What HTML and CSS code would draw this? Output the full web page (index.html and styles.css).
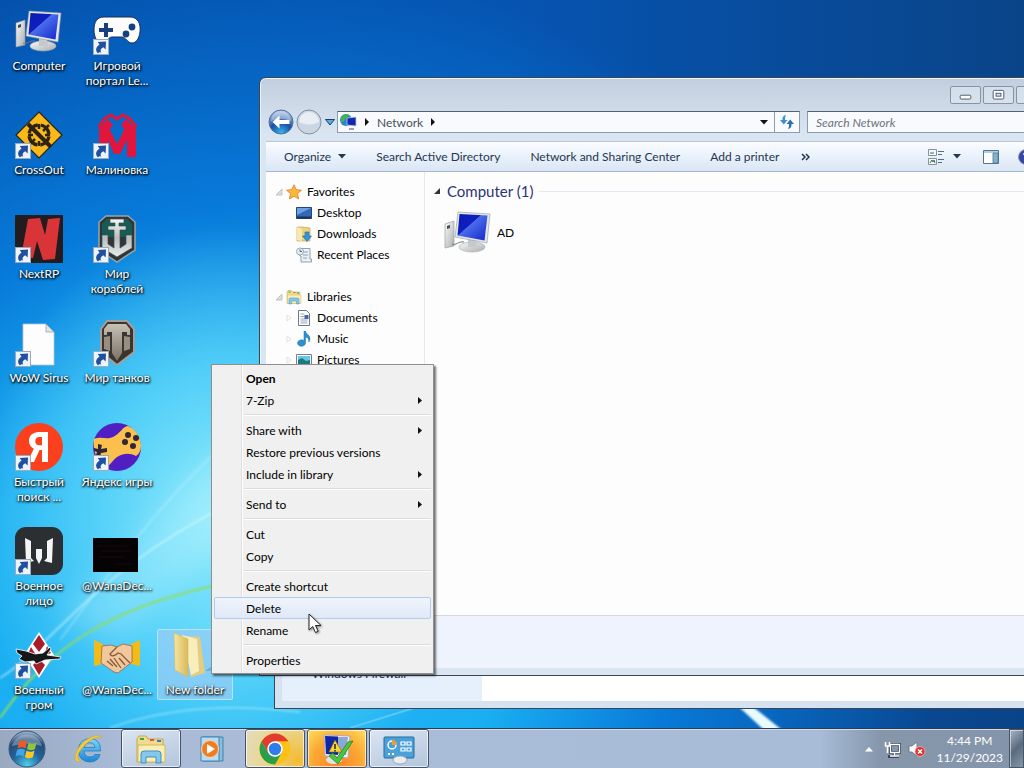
FILE: index.html
```html
<!DOCTYPE html>
<html lang="en">
<head>
<meta charset="utf-8">
<title>Desktop</title>
<link rel="stylesheet" href="styles.css">
</head>
<body>
<svg class="defs" aria-hidden="true">
  <defs>
    <linearGradient id="screen" x1="0" y1="0" x2="1" y2="1"><stop offset="0" stop-color="#0a1cae"/><stop offset=".4" stop-color="#0f1fc0"/><stop offset=".42" stop-color="#4a6cec"/><stop offset="1" stop-color="#1226c8"/></linearGradient>
    <linearGradient id="grey" x1="0" y1="0" x2="1" y2="1"><stop offset="0" stop-color="#fafbfb"/><stop offset="1" stop-color="#a9adae"/></linearGradient>
    <linearGradient id="steel" x1="0" y1="0" x2="0" y2="1"><stop offset="0" stop-color="#f3f5f5"/><stop offset=".5" stop-color="#b9bebd"/><stop offset="1" stop-color="#e8ebea"/></linearGradient>
    <linearGradient id="bronze" x1="0" y1="0" x2="0" y2="1"><stop offset="0" stop-color="#c8c0b4"/><stop offset="1" stop-color="#7b7167"/></linearGradient>
    <linearGradient id="gold" x1="0" y1="0" x2="1" y2="0"><stop offset="0" stop-color="#f6e6a0"/><stop offset="1" stop-color="#d9b95a"/></linearGradient>
    <linearGradient id="ie" x1="0" y1="0" x2="0" y2="1"><stop offset="0" stop-color="#7ed6fb"/><stop offset="1" stop-color="#1a86d4"/></linearGradient>
    <radialGradient id="orb" cx=".5" cy=".95" r=".9"><stop offset="0" stop-color="#4fd0e8"/><stop offset=".45" stop-color="#22649c"/><stop offset=".8" stop-color="#264a74"/><stop offset="1" stop-color="#8ea9c4"/></radialGradient>
    <radialGradient id="back" cx=".5" cy=".95" r=".9"><stop offset="0" stop-color="#35b8ee"/><stop offset=".5" stop-color="#1a4ea6"/><stop offset="1" stop-color="#a6bfe2"/></radialGradient>
    <symbol id="pc" viewBox="0 0 48 48">
      <path d="M1 16l9-3v25l-9 2z" fill="url(#grey)" stroke="#8f9699" stroke-width=".6"/>
      <path d="M3 18l3-1v3l-3 1z" fill="#444b50"/>
      <path d="M8 36c4 2 6-3 12-2" fill="none" stroke="#777" stroke-width="1"/>
      <ellipse cx="28" cy="39" rx="13" ry="5" fill="url(#grey)" stroke="#a9adb0" stroke-width=".6"/>
      <path d="M24 30l8 1 1 8h-9z" fill="#c6cacc"/>
      <path d="M14 4l32 2-3 29-32-6z" fill="#e4e7e8" stroke="#93999c" stroke-width=".6"/>
      <path d="M15.500 6l28 1.500-3 25-27-5z" fill="url(#screen)"/>
    </symbol>
    <symbol id="shortcut" viewBox="0 0 16 16">
      <rect x=".5" y=".5" width="15" height="15" fill="#eef3f9" stroke="#9aa9bb"/>
      <path d="M5 14.500C1.800 11.500 3 7.800 6.500 5.800L4.800 3 13 2.500 12.600 10.500 10.300 8.300C7.800 9.500 6.800 11.500 8.300 13.800 7 13 5.600 13.200 5 14.500z" fill="#1f4f9e"/>
    </symbol>
    <symbol id="library" viewBox="0 0 32 32">
      <path d="M2 6l2-3h7l2 3h15v23H2z" fill="#f0dc8c" stroke="#c7a646"/>
      <path d="M5 5h4v2H5z" fill="#3da55a"/><path d="M15 6h4v2h-4z" fill="#d55"/><path d="M22 7h4v2h-4z" fill="#3b7cc9"/>
      <path d="M3 12h27v17H3z" fill="#fbefb5" stroke="#d4b75c"/>
      <path d="M6 30V21q0-3 3-3h14q3 0 3 3v9h-5v-6H11v6z" fill="#84c8ee" stroke="#3f8fc7"/>
    </symbol>
  </defs>
</svg>

<div class="screen">
  <main class="desktop">
    <svg class="wallpaper" viewBox="0 0 1024 728" preserveAspectRatio="none" aria-hidden="true">
      <defs><filter id="soft"><feGaussianBlur stdDeviation="1.2"/></filter><filter id="haze"><feGaussianBlur stdDeviation="14"/></filter></defs>
      <path d="M60 620L230 440V540L120 640z" fill="#d8fbff" opacity=".25" filter="url(#haze)"/>
      <path d="M0 718C40 660 100 600 260 578" fill="none" stroke="#8fdc5e" stroke-width="2" filter="url(#soft)"/>
      <path d="M0 678C60 640 100 560 260 490" fill="none" stroke="#d9fbff" stroke-width="2" opacity=".55" filter="url(#soft)"/>
      <path d="M60 640C120 560 160 500 240 430" fill="none" stroke="#d9fbff" stroke-width="2" opacity=".3" filter="url(#soft)"/>
      <path d="M110 728C170 706 240 704 300 712" fill="none" stroke="#9be6fb" stroke-width="2" opacity=".6" filter="url(#soft)"/>
      <path d="M350 728L420 706" stroke="#7fd3fa" stroke-width="2" opacity=".6"/>
      <path d="M738 706L752 706 782 730 764 730z" fill="#e8fbff" filter="url(#soft)"/>
    </svg>

    <div class="icons">
      <div class="icon-column">
        <button class="icon"><svg viewBox="0 0 48 48"><use href="#pc"/></svg><span>Computer</span></button>
        <button class="icon"><svg viewBox="0 0 48 48"><path d="M24 1L47 24 24 47 1 24z" fill="#fbb81b" stroke="#2b2412" stroke-width="1.200"/><circle cx="24" cy="24" r="10" fill="none" stroke="#2b2412" stroke-width="3.500" stroke-dasharray="12.700 3" stroke-dashoffset="-1.500"/><path d="M24 13v5M24 30v5M13 24h5M30 24h5M34 14L28 20M14 34l6-6" stroke="#2b2412" stroke-width="2.500"/><path d="M13 13l23 23" stroke="#2b2412" stroke-width="4"/><use href="#shortcut" x="0" y="32" width="16" height="16"/></svg><span>CrossOut</span></button>
        <button class="icon"><svg viewBox="0 0 48 48"><path d="M0 0h48v48H0z" fill="#231c1e"/><path d="M13 4l12-1 5 17 3-16 12-1-5 41-12 1-6-19-4 17-12-1z" fill="#d93438"/><use href="#shortcut" x="0" y="32" width="16" height="16"/></svg><span>NextRP</span></button>
        <button class="icon"><svg viewBox="0 0 48 48"><path d="M8 5h23l8 8v33H8z" fill="#fdfdfd" stroke="#b9c4cc" stroke-width=".8"/><path d="M31 5v8h8z" fill="#dfe5e9" stroke="#98a5ae" stroke-width=".8"/><use href="#shortcut" x="0" y="32" width="16" height="16"/></svg><span>WoW Sirus</span></button>
        <button class="icon"><svg viewBox="0 0 48 48"><circle cx="24" cy="24" r="24" fill="#fc3f1d"/><path d="M33 39h-6V27h-2.500L19 39h-6.500l6.300-13.200C15.500 24 14 21.300 14 18c0-5.500 3.800-9 10-9h9zM27 14h-2.500c-2.800 0-4.200 1.500-4.200 4.200s1.400 4.100 4.200 4.100H27z" fill="#fff"/><use href="#shortcut" x="0" y="32" width="16" height="16"/></svg><span>Быстрый поиск ...</span></button>
        <button class="icon"><svg viewBox="0 0 48 48"><rect width="48" height="48" rx="11" fill="#2b2f31"/><path d="M10 11l6 3v17l3 3-8 2zM38 11l-6 3v17l-3 3 8 2z" fill="#f5f5f5"/><path d="M21 22h6v9l-3 6-3-6z" fill="#f5f5f5"/><use href="#shortcut" x="0" y="32" width="16" height="16"/></svg><span>Военное лицо</span></button>
        <button class="icon"><svg viewBox="0 0 48 48"><path d="M24 1L39 24 24 47 9 24z" fill="#fff"/><path d="M24 4l6 9-6 8-6-8zM16 16l5 8-5 2-3-3zM32 15l4 7-7 3zM24 28l6 6-6 10-6-10z" fill="#a81d28"/><path d="M1 18l10 2 9 3 8-1 7-6 1 2-4 6 14 2-1 2-15 1-9 4-2-3-9 1-6-3 3-3-5-3z" fill="#14181b" stroke="#fff" stroke-width=".8"/><use href="#shortcut" x="0" y="32" width="16" height="16"/></svg><span>Военный гром</span></button>
      </div>
      <div class="icon-column">
        <button class="icon"><svg viewBox="0 0 48 48"><path d="M11 10h26c8 0 11 7 10 15-1 7-4 11-8 11-5 0-6-6-10-6H19c-4 0-5 6-10 6-5 0-8-6-8-13 0-8 3-13 10-13z" fill="#fdfdfd" stroke="#16315c" stroke-width="1"/><path d="M11 16h4v5h5v4h-5v5h-4v-5H6v-4h5z" fill="#17407e"/><circle cx="39" cy="20" r="3.400" fill="#17407e"/><circle cx="33" cy="27" r="3.400" fill="#17407e"/><use href="#shortcut" x="0" y="32" width="16" height="16"/></svg><span>Игровой портал Le...</span></button>
        <button class="icon"><svg viewBox="0 0 48 48"><path d="M6 46V14l9 1 9 18 9-18 10-1v32h-9V29l-7 14h-6l-6-14v17z" fill="#e0163d"/><path d="M6 16l5-8 7-4 6 4 6-4 7 4 6 8" fill="none" stroke="#e0163d" stroke-width="3"/><path d="M9 14l6-6 5 6-4 5zM39 14l-6-6-5 6 4 5z" fill="#e0163d"/><use href="#shortcut" x="0" y="32" width="16" height="16"/></svg><span>Малиновка</span></button>
        <button class="icon"><svg viewBox="0 0 48 48"><path d="M13 1h22l7 6v28L24 47 6 35V7z" fill="#303638" stroke="#9ba4a4" stroke-width="1.500"/><path d="M14 4h20l5 5v13H9V9z" fill="#145c54"/><path d="M17 4h14v4h-5v3h7v4h-6v18l6-4v-9h6v13L24 42 9 33V20h6v9l6 4V15h-6v-4h7V8h-5z" fill="url(#steel)" stroke="#404848" stroke-width=".7"/><use href="#shortcut" x="0" y="32" width="16" height="16"/></svg><span>Мир кораблей</span></button>
        <button class="icon"><svg viewBox="0 0 48 48"><path d="M14 2h20l7 8v23L24 46 8 33V10z" fill="#3a3531" stroke="#a69e94" stroke-width="2"/><path d="M15 5h18l4 5v6h-3v-3h-5v21l-5 8-5-8V13h-5v3h-3v-6z" fill="url(#bronze)"/><path d="M11 18l6-1v15l-6-2zM31 17l6 1v12l-6 2z" fill="#978d81"/><use href="#shortcut" x="0" y="32" width="16" height="16"/></svg><span>Мир танков</span></button>
        <button class="icon"><svg viewBox="0 0 48 48"><circle cx="24" cy="24" r="24" fill="#511fc1"/><path d="M1 16c8-3 12 1 19-2 8-4 9-10 15-11 7 3 12 9 13 19 0 6-2 9-5 11-6-3-12-3-19 1-4 3-7 8-10 10-9-4-15-16-13-28z" fill="#fbc04c"/><g fill="#302637"><circle cx="35" cy="12" r="3"/><circle cx="43" cy="15" r="3"/><circle cx="32" cy="19" r="3"/><circle cx="40" cy="23" r="3"/><path d="M5 21l4 1-1 4 6-1v4l-6 1-1 4-4-2 1-3-3-1v-3l4 1z"/></g><use href="#shortcut" x="0" y="32" width="16" height="16"/></svg><span>Яндекс игры</span></button>
        <button class="icon"><svg viewBox="0 0 48 48"><path d="M0 11h45v34H0z" fill="#060304"/><path d="M4 19h32M8 24h30M5 30h27M22 37h18" stroke="#1c0b0a" stroke-width="1"/></svg><span>@WanaDec...</span></button>
        <button class="icon"><svg viewBox="0 0 48 48"><path d="M1 9l9 4v20l-9 2zM47 9l-9 4v20l9 2z" fill="#f1bb18"/><path d="M9 15l9-1 6 2 6-3 9 2v16l-9 7-5 4-4-1-10-7-3-2z" fill="#f1c79c" stroke="#9a6540" stroke-width=".8"/><path d="M24 16l-7 7c1 3 5 2 8-1l3 1 9 9M14 30l6 5M17 28l7 8M21 27l7 10M26 27l6 7" fill="none" stroke="#8d5836" stroke-width="1.300"/></svg><span>@WanaDec...</span></button>
      </div>
      <div class="icon-column bottom">
        <button class="icon selected"><svg viewBox="0 0 48 48"><path d="M34 40l13-9-4 9z" fill="#4a93ae" opacity=".5"/><path d="M13 5l16 1 5 36-14 4z" fill="#e4cd80"/><path d="M11 4l15 4 2 32-8 4z" fill="#f8eebb"/><path d="M3 2l14 6v38L4 39z" fill="url(#gold)" stroke="#d6b862" stroke-width=".6"/></svg><span>New folder</span></button>
      </div>
    </div>

    <section class="window rear" aria-label="System and Security">
      <div class="rear-side"><a href="#">Windows Firewall</a></div>
      <div class="rear-body"></div>
    </section>

    <section class="window front" aria-label="Network">
      <header class="titlebar">
        <button class="caption" aria-label="Minimize"><svg viewBox="0 0 30 16"><rect x="9.500" y="8.500" width="11" height="4" rx="1" fill="#fff" stroke="#4b5a70"/></svg></button>
        <button class="caption" aria-label="Maximize"><svg viewBox="0 0 30 16"><rect x="9.500" y="3.500" width="11" height="9" rx="1" fill="#fff" stroke="#4b5a70"/><rect x="12.500" y="6.500" width="5" height="3" fill="#dbe3ec" stroke="#4b5a70"/></svg></button>
        <button class="caption" aria-label="Close"><svg viewBox="0 0 30 16"><path d="M11 4l8 8M19 4l-8 8" stroke="#4b5a70" stroke-width="2"/></svg></button>
      </header>

      <nav class="navbar">
        <div class="history">
          <button aria-label="Back"><svg viewBox="0 0 26 26"><circle cx="13" cy="13" r="12" fill="url(#back)" stroke="#50719c"/><path d="M3 12a10 10 0 0 1 20 0q-10-4-20 0z" fill="#fff" opacity=".35"/><path d="M4.500 13l7-6.500V11h10v4h-10v4.500z" fill="#fff"/></svg></button>
          <button aria-label="Forward"><svg viewBox="0 0 26 26"><circle cx="13" cy="13" r="12" fill="#ccd6e2" stroke="#8292a6"/><path d="M3 13a10 10 0 0 1 20 0q-10 5-20 0z" fill="#e9eef4"/></svg></button>
          <button class="recent" aria-label="Recent pages"><svg viewBox="0 0 12 10"><path d="M1.500 2.500h9L6 8z" fill="#4eb2e4" stroke="#1f3e63"/></svg></button>
        </div>
        <div class="address">
          <svg class="net" viewBox="0 0 18 18"><circle cx="7" cy="7" r="6" fill="#2b82cf"/><path d="M2 5c3-5 7-4 8-3-1 3-3 2-4 4s-2 4-4 3z" fill="#43b649"/><path d="M8 5l9-1v9l-9-1z" fill="#1327b3" stroke="#c4cbd8" stroke-width=".8"/><path d="M10 15h5v2h-5z" fill="#9aa4b1"/></svg>
          <svg class="crumb" viewBox="0 0 6 8"><path d="M1 0l4 4-4 4z" fill="#111"/></svg>
          <a href="#">Network</a>
          <svg class="crumb" viewBox="0 0 6 8"><path d="M1 0l4 4-4 4z" fill="#111"/></svg>
          <button class="drop" aria-label="Previous locations"><svg viewBox="0 0 8 5"><path d="M0 0h8L4 4.500z" fill="#111"/></svg></button>
          <button class="refresh" aria-label="Refresh"><svg viewBox="0 0 16 16"><path d="M7 1C4 1.500 3.500 3.500 3.500 6H1l3.800 4.500L8.500 6H6c0-2 0-3.500 1-5z" fill="#3b8fd0"/><path d="M9 15c3-.5 3.500-2.500 3.500-5H15l-3.800-4.500L7.500 10H10c0 2 0 3.500-1 5z" fill="#2b6fb0"/></svg></button>
        </div>
        <input class="search" type="search" placeholder="Search Network" aria-label="Search Network">
      </nav>

      <div class="toolbar">
        <button>Organize<svg class="caret" viewBox="0 0 8 5"><path d="M0 0h8L4 4.500z" fill="#26364d"/></svg></button>
        <button>Search Active Directory</button>
        <button>Network and Sharing Center</button>
        <button>Add a printer</button>
        <button class="more" aria-label="More commands"><svg viewBox="0 0 9 8"><path d="M1 1l3 3-3 3M5 1l3 3-3 3" fill="none" stroke="#26364d" stroke-width="1.500"/></svg></button>
        <div class="tools">
          <button aria-label="Change view"><svg viewBox="0 0 16 16"><path d="M.5.5h8v6h-8zM.5 9.500h8v6h-8z" fill="#f5f8fa" stroke="#80949a"/><path d="M2 4h4M2 14l2-3 1 2 1-2 1 3" stroke="#3f6f58" fill="none"/><path d="M10 2.500h6M10 5.500h4M10 10.500h6M10 13.500h4" stroke="#5b6b83"/></svg></button>
          <button aria-label="View options"><svg class="caret" viewBox="0 0 8 5"><path d="M0 0h8L4 4.500z" fill="#26364d"/></svg></button>
          <button class="pane" aria-label="Preview pane"><svg viewBox="0 0 16 16"><path d="M.5 1.500h15v13H.5z" fill="#fff" stroke="#53738f"/><path d="M1 2h14v2H1z" fill="#b4cfe4"/><path d="M10 4h5v10h-5z" fill="#7fb6cc" stroke="#53738f" stroke-width=".8"/></svg></button>
          <button class="help" aria-label="Help"><svg viewBox="0 0 16 16"><circle cx="8" cy="8" r="7.500" fill="#3747a2" stroke="#8c96bd"/><path d="M6 6q0-2.500 2.200-2.500T10.300 6Q10 7.300 8 9" fill="none" stroke="#fff" stroke-width="1.600"/><circle cx="8" cy="11.500" r="1" fill="#fff"/></svg></button>
        </div>
      </div>

      <div class="content">
        <nav class="tree">
          <div class="group">
            <a href="#" class="root"><svg class="twist" viewBox="0 0 8 8"><path d="M7 1v6H1z" fill="#dcdcdc" stroke="#c4c4c4"/></svg><svg viewBox="0 0 16 16"><path d="M8 .8l2.200 4.800 5.300.6-4 3.500 1.200 5.300L8 12.300 3.300 15l1.200-5.300-4-3.500 5.300-.6z" fill="#fbb83e" stroke="#d9822b" stroke-width=".8"/></svg>Favorites</a>
            <a href="#"><svg viewBox="0 0 16 16"><path d="M.5 2.500h15v11H.5z" fill="#3267ba" stroke="#24467c"/><path d="M1 3h14L1 10z" fill="#6fa0e0"/><path d="M1 11.500h14v2H1z" fill="#1c3353"/></svg>Desktop</a>
            <a href="#"><svg viewBox="0 0 16 16"><path d="M1 1h5l8 1v13H1z" fill="#ecd27b" stroke="#c7a54d" stroke-width=".7"/><path d="M1 1l5 2v12l-5-1z" fill="#f8eaaf"/><path d="M9 6h4v4h2.500L11 15.500 6.500 10H9z" fill="#3594da" stroke="#1e6aaa" stroke-width=".6"/></svg>Downloads</a>
            <a href="#"><svg viewBox="0 0 16 16"><path d="M4 1.500h10V12h1.500v3H5V9H4z" fill="#edf1f4" stroke="#7c8d99" stroke-width=".8"/><path d="M7 5h5M7 8h5M7 11h4" stroke="#7fa5c4"/><circle cx="4" cy="4.500" r="3.500" fill="#e7eef3" stroke="#8b9aa5" stroke-width=".8"/><path d="M4 2.500v2h2" fill="none" stroke="#567"/></svg>Recent Places</a>
          </div>
          <div class="group">
            <a href="#" class="root"><svg class="twist" viewBox="0 0 8 8"><path d="M7 1v6H1z" fill="#dcdcdc" stroke="#c4c4c4"/></svg><svg viewBox="0 0 32 32"><use href="#library"/></svg>Libraries</a>
            <a href="#" class="leaf"><svg class="twist" viewBox="0 0 8 8"><path d="M2 1l4 3-4 3z" fill="#fff" stroke="#e0e0e0"/></svg><svg viewBox="0 0 16 16"><path d="M2.500.5h8l3 3v12h-11z" fill="#fff" stroke="#6b7989"/><path d="M4.500 4h4M4.500 6.500h4M4.500 9h7M4.500 11h7M4.500 13h7" stroke="#9aa6b8"/><path d="M8.500 5h4v4h-4z" fill="#4d62a8"/></svg>Documents</a>
            <a href="#" class="leaf"><svg class="twist" viewBox="0 0 8 8"><path d="M2 1l4 3-4 3z" fill="#fff" stroke="#e0e0e0"/></svg><svg viewBox="0 0 16 16"><path d="M8 0h1.500c0 3 5 4 4.500 8-.2 1-.5 2-1.200 3 .4-3-1-4.500-3.300-5v6.500A4 3.200 0 1 1 8 9.500z" fill="#2a92d0" stroke="#1b6fa8" stroke-width=".5"/></svg>Music</a>
            <a href="#" class="leaf"><svg class="twist" viewBox="0 0 8 8"><path d="M2 1l4 3-4 3z" fill="#fff" stroke="#e0e0e0"/></svg><svg viewBox="0 0 16 16"><path d="M.5 2.500h15v11H.5z" fill="#fff" stroke="#6c8299"/><path d="M2 4h12v8H2z" fill="#67c6e2"/><path d="M2 8l4-2 4 3 4-1v4H2z" fill="#1d7a7a"/></svg>Pictures</a>
          </div>
        </nav>
        <div class="files">
          <h2><svg viewBox="0 0 8 8"><path d="M7 1v6H1z" fill="#333"/></svg>Computer (1)</h2>
          <button class="file"><svg viewBox="0 0 48 48"><use href="#pc"/></svg>AD</button>
        </div>
      </div>
      <footer class="details"></footer>
    </section>

    <menu class="context">
      <li><button><b>Open</b></button></li>
      <li><button>7-Zip<svg viewBox="0 0 4 7"><path d="M0 0l4 3.500-4 3.500z" fill="#111"/></svg></button></li>
      <li class="rule"></li>
      <li><button>Share with<svg viewBox="0 0 4 7"><path d="M0 0l4 3.500-4 3.500z" fill="#111"/></svg></button></li>
      <li><button>Restore previous versions</button></li>
      <li><button>Include in library<svg viewBox="0 0 4 7"><path d="M0 0l4 3.500-4 3.500z" fill="#111"/></svg></button></li>
      <li class="rule"></li>
      <li><button>Send to<svg viewBox="0 0 4 7"><path d="M0 0l4 3.500-4 3.500z" fill="#111"/></svg></button></li>
      <li class="rule"></li>
      <li><button>Cut</button></li>
      <li><button>Copy</button></li>
      <li class="rule"></li>
      <li><button>Create shortcut</button></li>
      <li><button class="hot">Delete</button></li>
      <li><button>Rename</button></li>
      <li class="rule"></li>
      <li><button>Properties</button></li>
    </menu>
    <svg class="cursor" viewBox="0 0 14 21" aria-hidden="true"><path d="M1 1v16l3.700-3.500 2.800 6 2.700-1.200-2.700-5.800H13z" fill="#fff" stroke="#222"/></svg>
  </main>

  <footer class="taskbar">
    <button class="start" aria-label="Start"><svg viewBox="0 0 38 38"><circle cx="19" cy="19" r="18" fill="url(#orb)" stroke="#3c5676"/><path d="M4 16a15.500 15.500 0 0 1 30 0q-15-5-30 0z" fill="#fff" opacity=".3"/><path d="M11 12q4-3 8 0l-1.500 6.500q-4-2.500-8 0z" fill="#ee5a27"/><path d="M20.500 12.500q4 2.500 8 0L27 19q-4 2.500-8 0z" fill="#8ac63f"/><path d="M9 20q4-2.500 8 0l-1.500 6.500q-4-2.500-8 0z" fill="#42a5e8"/><path d="M18.500 20.500q4 2.500 8 0L25 27q-4 2.500-8 0z" fill="#fcc721"/></svg></button>
    <button class="task" aria-label="Internet Explorer"><svg viewBox="0 0 32 32"><path d="M27.500 18H11q.5 6 6 6 3.500 0 4.800-2.500h5.300Q25 29 17 29 5.500 28.500 5.500 17 6 6 17 5.500q11 .5 10.500 12.500zM11 14.500h11q-.5-4.700-5.300-4.700T11 14.500z" fill="url(#ie)" stroke="#1878bd" stroke-width=".7"/><path d="M29 4C22-1 6 9 3 21c-2 6 0 9 5 7-6-1-3-9 2-14C16 7 24 3 29 4z" fill="#f9cd2d" stroke="#dca51b" stroke-width=".5"/></svg></button>
    <button class="task open" aria-label="Windows Explorer"><svg viewBox="0 0 32 32"><use href="#library"/></svg></button>
    <button class="task" aria-label="Windows Media Player"><svg viewBox="0 0 32 32"><path d="M6 4h20v24H6z" fill="#88bddd" stroke="#3e83b2"/><path d="M4 4h18v24H4z" fill="#b9dcf0" stroke="#3e83b2"/><circle cx="13" cy="16" r="8.500" fill="#f07c22" stroke="#fbd4b3"/><path d="M10 11l8 5-8 5z" fill="#fff"/></svg></button>
    <button class="task open warm" aria-label="Google Chrome"><svg viewBox="0 0 32 32"><circle cx="16" cy="16" r="15.500" fill="#fbc116"/><path d="M2.600 8.300A15.500 15.500 0 0 1 29.400 8.300H16L9.300 19.900z" fill="#e33b2e"/><path d="M2.600 8.300A15.500 15.500 0 0 0 16 31.500L22.700 19.900 16 23.700 9.300 19.900z" fill="#2a9e49"/><circle cx="16" cy="16" r="7.700" fill="#fff"/><circle cx="16" cy="16" r="6.200" fill="#2f7de8"/></svg></button>
    <button class="task open alert" aria-label="Setup"><svg viewBox="0 0 32 32"><ellipse cx="13" cy="27" rx="8" ry="4" fill="#dfe3e8"/><path d="M3 2l26 1-2 22-23-2z" fill="#eef0f2" stroke="#aab"/><path d="M4 3l13 .5V22L5 21z" fill="#1026a5"/><path d="M17 4h10l-2 18-8-1z" fill="#8fa6d9"/><path d="M14 7l7 12H8z" fill="#fdd835" stroke="#8a6a00" stroke-width=".6"/><path d="M14 11v5M14 17v1.500" stroke="#222" stroke-width="1.500"/><path d="M8 23l4-3 4 5L27 9l5-1L17 31z" fill="#4dc63b" stroke="#23852a" stroke-width=".8"/></svg></button>
    <button class="task open" aria-label="Control Panel"><svg viewBox="0 0 32 32"><rect x="1" y="4" width="30" height="21" rx="1" fill="#4aa1d8" stroke="#246c9f"/><circle cx="9" cy="12" r="4" fill="none" stroke="#fff" stroke-width="1.500"/><path d="M9 12V7a5 5 0 0 1 5 5z" fill="#f59a3b"/><path d="M18 9h4v3h-4zM24 9h4v3h-4zM18 15h4v3h-4zM24 15h4v3h-4z" fill="none" stroke="#fff" stroke-width="1.200"/><path d="M5 21h2M9 21h2" stroke="#fff" stroke-width="2"/><ellipse cx="17" cy="27" rx="7" ry="4" fill="#e9edf0" stroke="#9aa7b3"/></svg></button>
    <div class="tray">
      <button class="tiny" aria-label="Show hidden icons"><svg viewBox="0 0 10 6"><path d="M1 5.500L5 1l4 4.500z" fill="#fff"/></svg></button>
      <button aria-label="Network status"><svg viewBox="0 0 18 18"><path d="M6.500 4.500h9v8h-9zM4 16.500h11M10 13v3" fill="none" stroke="#38485c" stroke-width="3"/><path d="M6.500 4.500h9v8h-9zM6 16h9M10.500 13v3" fill="none" stroke="#fff" stroke-width="1.300"/><path d="M1.500 2v4h4V2M3.500 6v7" fill="none" stroke="#fff" stroke-width="1.500"/></svg></button>
      <button aria-label="Volume muted"><svg viewBox="0 0 18 18"><path d="M1 6h3l5-4v14l-5-4H1z" fill="#f7f9fb" stroke="#5f6f82" stroke-width=".8"/><circle cx="12" cy="11.500" r="5" fill="#d93535" stroke="#f2b1b1" stroke-width=".8"/><path d="M10 9.500l4 4M14 9.500l-4 4" stroke="#fff" stroke-width="1.500"/></svg></button>
      <time class="clock" datetime="2023-11-29T16:44"><span>4:44 PM</span><span>11/29/2023</span></time>
      <button class="peek" aria-label="Show desktop"></button>
    </div>
  </footer>
</div>
</body>
</html>
```

FILE: styles.css
```css
* { box-sizing: border-box; }

body {
  margin: 0;
  font: 12px/15px Lato, "Open Sans", sans-serif;
  color: #000;
}

button {
  padding: 0;
  border: 0;
  background: none;
  font: inherit;
  color: inherit;
}

a { color: inherit; text-decoration: none; }
svg { display: block; flex: none; }
.defs { position: absolute; width: 0; height: 0; }

.screen {
  display: grid;
  grid-template-rows: minmax(0, 1fr) 40px;
  height: 100vh;
  overflow: hidden;
}

.desktop {
  position: relative;
  overflow: hidden;
  background:
    radial-gradient(ellipse 25% 40% at 22% 71%, rgba(150, 238, 252, .95), rgba(120, 228, 252, .6) 50%, rgba(80, 205, 248, 0)),
    radial-gradient(ellipse 68% 90% at 24% 84%, #28bcf5 0%, #1aaef2 38%, rgba(8, 132, 228, .8) 62%, rgba(6, 96, 196, 0) 100%),
    linear-gradient(90deg, #0450ac 0%, #0654b2 50%, #0a4488 100%);
}

.wallpaper { position: absolute; inset: 0; width: 100%; height: 100%; }

/* desktop icons */
.icons {
  position: relative;
  display: flex;
  padding-top: 5px;
}
.icon-column { display: grid; grid-auto-rows: 104px; width: 78px; }
.icon-column.bottom { grid-template-rows: repeat(6, 104px); }
.icon-column.bottom .icon { grid-row: 7; }
.icon {
  display: flex;
  flex-direction: column;
  align-items: center;
  align-self: start;
  gap: 3px;
  margin: 0 1px;
  padding: 2px 0;
  color: #fff;
  text-shadow: 1px 1px 2px #000, 0 1px 3px #000;
}
.icon svg { width: 48px; height: 48px; }
.icon.selected {
  padding: 1px 1px 2px;
  border: 1px solid rgba(190, 232, 255, .8);
  border-radius: 2px;
  background: rgba(160, 205, 245, .65);
}

/* windows */
.window {
  position: absolute;
  right: -30px;
  display: flex;
  border: 1px solid #3a4656;
  background: #d6e2ef;
}
.rear { left: 274px; top: 600px; bottom: 19px; padding: 7px; }
.rear-side {
  display: flex;
  width: 200px;
  padding: 58px 0 0 30px;
  background: #e6effc;
  color: #1c2c58;
}
.rear-body { flex: 1; background: #fff; }

.front {
  left: 259px;
  top: 77px;
  bottom: 52px;
  flex-direction: column;
  padding: 0 6px 7px;
  border-radius: 7px 7px 0 0;
  background: linear-gradient(#c2cedd, #d9e5f1 56px);
  box-shadow: inset 0 1px #eef4fa, inset 1px 0 #eef4fa;
}

.titlebar {
  display: flex;
  justify-content: flex-end;
  gap: 2px;
  padding-top: 8px;
}
.caption {
  width: 31px;
  height: 18px;
  border: 1px solid #8694a8;
  border-radius: 2px;
  background: rgba(235, 242, 249, .4);
}

.navbar {
  display: flex;
  align-items: center;
  gap: 7px;
  padding: 4px 0 5px 2px;
}
.history { display: flex; align-items: center; gap: 2px; width: 69px; height: 28px; margin-right: -7px; }
.history svg { width: 26px; height: 26px; }
.history .recent svg { width: 12px; height: 10px; }
.address {
  display: flex;
  flex: 1;
  align-items: center;
  height: 22px;
  padding-left: 1px;
  border: 1px solid #8b9bb0;
  border-top-color: #546274;
  background: #f8fafe;
  color: #48505a;
}
.net { width: 18px; height: 18px; }
.crumb { width: 6px; height: 8px; margin: 0 7px; }
.drop { display: grid; place-items: center; width: 20px; height: 20px; margin-left: auto; }
.drop svg { width: 8px; height: 5px; }
.refresh { display: grid; place-items: center; width: 25px; height: 20px; border-left: 1px solid #8b9bb0; }
.refresh svg { width: 16px; height: 16px; }
.search {
  width: 240px;
  height: 22px;
  padding: 0 8px;
  border: 1px solid #8b9bb0;
  border-top-color: #546274;
  border-radius: 0;
  background: #f8fafe;
  font: inherit;
}
.search::placeholder { color: #6b737c; font-style: italic; opacity: 1; }

.toolbar {
  display: flex;
  align-items: center;
  gap: 30px;
  height: 31px;
  padding: 0 13px 0 18px;
  border-top: 1px solid #b6c6d8;
  border-bottom: 1px solid #a9b9cd;
  background: linear-gradient(#fbfdff, #e9f1fb 50%, #dbe6f4);
  color: #26364d;
}
.toolbar button { display: flex; align-items: center; gap: 7px; flex: none; }
.caret { width: 8px; height: 5px; }
.more svg { width: 9px; height: 8px; }
.toolbar .more { margin-left: -8px; }
.tools { display: flex; align-items: center; gap: 9px; margin-left: auto; }
.tools button svg:not(.caret) { width: 16px; height: 16px; }
.pane { margin-left: 13px; }
.help { margin-left: 10px; }

.content { display: flex; flex: 1; min-height: 0; background: #fdfdfe; }
.tree {
  width: 159px;
  padding-top: 9px;
  border-right: 1px solid #e3e8f1;
  overflow: hidden;
}
.group { margin-bottom: 21px; }
.tree a {
  display: flex;
  align-items: center;
  gap: 5px;
  height: 21px;
  padding-left: 30px;
}
.tree svg { width: 16px; height: 16px; }
.tree .twist { width: 8px; height: 8px; margin-right: -2px; }
.tree .root { padding-left: 9px; }
.tree .leaf { padding-left: 19px; }

.files { flex: 1; padding: 9px 7px 0 8px; }
.files h2 {
  display: flex;
  align-items: center;
  gap: 6px;
  margin: 0 0 7px;
  font-size: 15px;
  line-height: 20px;
  font-weight: 400;
  color: #2d3277;
}
.files h2 svg { width: 8px; height: 8px; }
.files h2::after { content: ""; flex: 1; height: 1px; background: #e4e8f1; }
.file { display: flex; align-items: center; gap: 5px; margin-left: 11px; }
.file svg { width: 48px; height: 48px; }

.details {
  height: 53px;
  border-top: 1px solid #d2dae4;
  background: #eff3fd;
}

/* context menu */
.context {
  position: absolute;
  left: 211px;
  top: 364px;
  width: 223px;
  margin: 0;
  padding: 2px;
  border: 1px solid #8f8f8f;
  background: linear-gradient(90deg, #f0f0f0 29px, #dfdfdf 29px 30px, #fff 30px 31px, #f0f0f0 31px);
  box-shadow: 2px 2px 2px rgba(0, 0, 0, .55);
  list-style: none;
}
.context button {
  display: flex;
  align-items: center;
  justify-content: space-between;
  width: 100%;
  height: 22px;
  padding: 0 8px 0 31px;
  border: 1px solid transparent;
  border-radius: 2px;
}
.context svg { width: 4px; height: 7px; }
.context .hot { border-color: #b3cbef; background: linear-gradient(rgba(240, 244, 252, .9), rgba(222, 232, 248, .9)); }
.rule {
  height: 8px;
  margin-left: 30px;
  background: linear-gradient(transparent 3px, #dcdcdc 3px 4px, #fff 4px 5px, transparent 5px);
}

.cursor {
  position: absolute;
  left: 308px;
  top: 613px;
  width: 14px;
  height: 21px;
  filter: drop-shadow(1px 1px 1px rgba(0, 0, 0, .45));
}

/* taskbar */
.taskbar {
  display: flex;
  align-items: center;
  gap: 2px;
  border-top: 1px solid #2c3d56;
  box-shadow: inset 0 1px #d0dced;
  background: linear-gradient(90deg, #98a9c0, #a9bbd7 12%, #a8bcd8 80%, #8697ac 86%, #8494aa);
}
.start { width: 57px; padding-left: 8px; }
.start svg { width: 38px; height: 38px; }
.task { display: grid; place-items: center; width: 60px; height: 39px; }
.task svg { width: 32px; height: 32px; }
.open {
  border: 1px solid #46546b;
  border-radius: 3px;
  background: linear-gradient(160deg, #dbe5f1, #b3c5dd);
  box-shadow: inset 0 0 0 1px rgba(255, 255, 255, .65);
}
.warm { background: radial-gradient(circle at 90% 80%, #f3bb32, #ead692 55%, #e2ddbf); }
.alert { background: radial-gradient(circle at 50% 90%, #ff8426, #fba834 55%, #ffe05b); }
.tray {
  display: flex;
  align-items: center;
  align-self: stretch;
  gap: 6px;
  margin-left: auto;
  color: #fff;
}
.tray svg { width: 18px; height: 18px; }
.tray .tiny { margin-right: 4px; }
.tray .tiny svg { width: 10px; height: 6px; }
.clock { display: grid; margin-left: 4px; line-height: 17px; text-align: center; }
.peek {
  align-self: stretch;
  width: 15px;
  border: 1px solid #46566b;
  background: linear-gradient(135deg, #a8b5c4, #5b6b7f 50%, #8797a9);
  box-shadow: inset 1px 1px rgba(255, 255, 255, .5);
}
```
